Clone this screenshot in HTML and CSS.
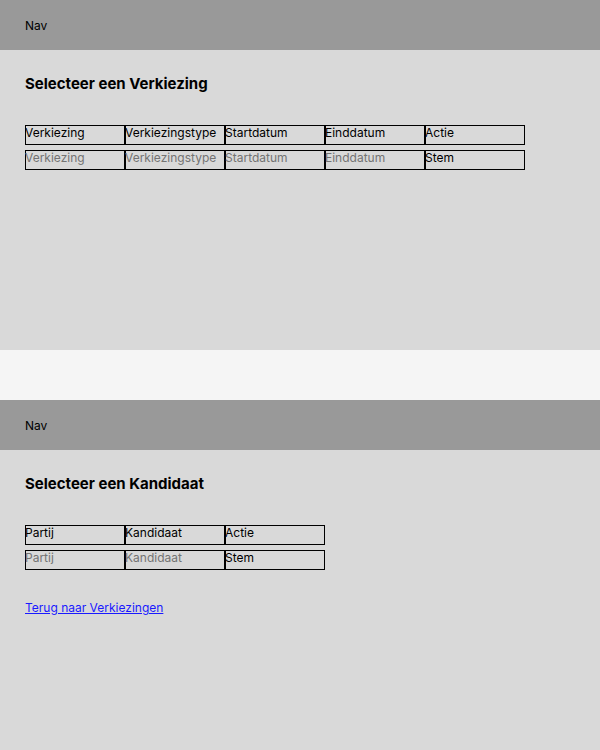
FILE: index.html
```html
<!DOCTYPE html>
<html lang="nl">
<head>
<meta charset="utf-8">
<title>Verkiezingen</title>
<link rel="stylesheet" href="styles.css">
</head>
<body>
<div class="screens">
  <section class="screen">
    <nav class="nav">Nav</nav>
    <main class="main">
      <h2 class="title">Selecteer een Verkiezing</h2>
      <div class="table">
        <div class="row">
          <div class="cell">Verkiezing</div>
          <div class="cell">Verkiezingstype</div>
          <div class="cell">Startdatum</div>
          <div class="cell">Einddatum</div>
          <div class="cell">Actie</div>
        </div>
        <div class="row">
          <div class="cell muted">Verkiezing</div>
          <div class="cell muted">Verkiezingstype</div>
          <div class="cell muted">Startdatum</div>
          <div class="cell muted">Einddatum</div>
          <div class="cell">Stem</div>
        </div>
      </div>
    </main>
  </section>
  <section class="screen">
    <nav class="nav">Nav</nav>
    <main class="main">
      <h2 class="title">Selecteer een Kandidaat</h2>
      <div class="table">
        <div class="row">
          <div class="cell">Partij</div>
          <div class="cell">Kandidaat</div>
          <div class="cell">Actie</div>
        </div>
        <div class="row">
          <div class="cell muted">Partij</div>
          <div class="cell muted">Kandidaat</div>
          <div class="cell">Stem</div>
        </div>
      </div>
      <a class="back" href="#">Terug naar Verkiezingen</a>
    </main>
  </section>
</div>
</body>
</html>
```

FILE: styles.css
```css
html, body {
  margin: 0;
  padding: 0;
}
body {
  background: #f5f5f5;
  font-family: Inter, "Noto Sans", sans-serif;
  font-size: 12px;
  color: #000;
}
.screens {
  display: flex;
  flex-direction: column;
  gap: 50px;
}
.screen {
  display: flex;
  flex-direction: column;
}
.nav {
  height: 50px;
  background: #999999;
  display: flex;
  align-items: center;
  padding: 0 25px;
  font-size: 12px;
  line-height: 15px;
}
.main {
  height: 300px;
  box-sizing: border-box;
  background: #d9d9d9;
  padding: 24px 25px;
  display: flex;
  flex-direction: column;
  align-items: flex-start;
}
.title {
  margin: 0;
  font-size: 15px;
  font-weight: 700;
  line-height: 19px;
}
.table {
  margin-top: 32px;
  display: flex;
  flex-direction: column;
  gap: 5px;
}
.row {
  display: flex;
}
.cell {
  width: 100px;
  height: 20px;
  box-sizing: border-box;
  box-shadow: inset 0 0 0 1px #000;
  line-height: 15px;
  white-space: nowrap;
}
.muted {
  color: #737373;
}
.back {
  margin-top: 30px;
  color: #1a1aff;
  line-height: 15px;
}
```
